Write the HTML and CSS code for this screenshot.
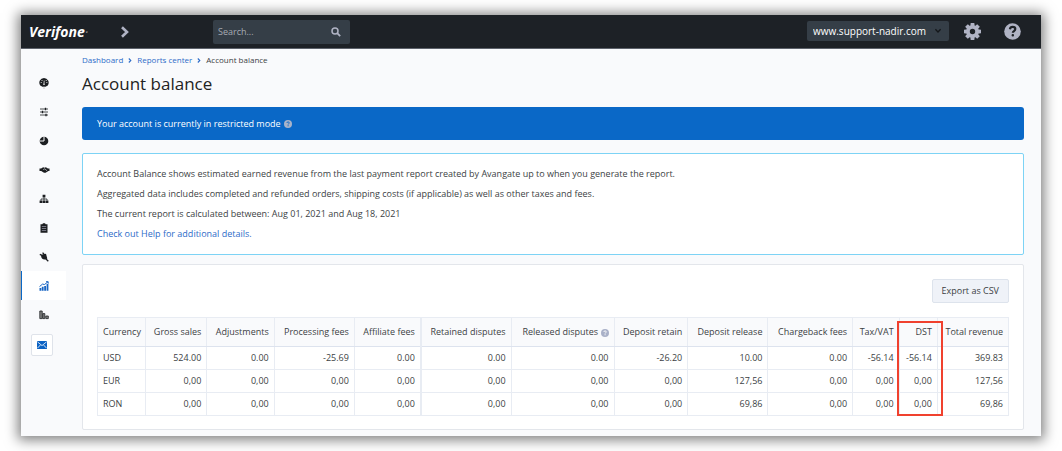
FILE: index.html
```html
<!DOCTYPE html>
<html lang="en">
<head>
<meta charset="utf-8">
<title>Account balance</title>
<link rel="stylesheet" href="styles.css">
</head>
<body>
<div class="frame">
  <header class="topbar">
    <a class="logo" href="#">Verifone<span class="logo-mark">·</span></a>
    <button class="icon-button expand" aria-label="Expand menu">
      <svg width="10" height="12" viewBox="0 0 10 12"><path d="M2 1.2 7 6 2 10.8" fill="none" stroke="currentColor" stroke-width="2.6"/></svg>
    </button>
    <form class="search">
      <input class="search-input" type="text" aria-label="Search" placeholder="Search...">
      <button class="icon-button" type="button" aria-label="Search">
        <svg width="10" height="10" viewBox="0 0 10 10"><circle cx="4" cy="4" r="3" fill="none" stroke="currentColor" stroke-width="1.5"/><path d="m6.2 6.2 3 3" stroke="currentColor" stroke-width="1.8"/></svg>
      </button>
    </form>
    <div class="site">
      <select class="site-select" aria-label="Site"><option>www.support-nadir.com</option></select>
      <svg class="site-arrow" width="8" height="6" viewBox="0 0 8 6"><path d="m1.4 1.2 2.6 2.8 2.6-2.8" fill="none" stroke="currentColor" stroke-width="1.3"/></svg>
    </div>
    <button class="icon-button settings" aria-label="Settings">
      <svg width="17" height="17" viewBox="-12 -12 24 24"><g fill="currentColor"><path d="M-2.600-12h5.200l.6 5h-6.400z"/><path d="M-2.600-12h5.200l.6 5h-6.400z" transform="rotate(45)"/><path d="M-2.600-12h5.200l.6 5h-6.400z" transform="rotate(90)"/><path d="M-2.600-12h5.200l.6 5h-6.400z" transform="rotate(135)"/><path d="M-2.600-12h5.200l.6 5h-6.400z" transform="rotate(180)"/><path d="M-2.600-12h5.200l.6 5h-6.400z" transform="rotate(225)"/><path d="M-2.600-12h5.200l.6 5h-6.400z" transform="rotate(270)"/><path d="M-2.600-12h5.200l.6 5h-6.400z" transform="rotate(315)"/></g><circle r="6.300" fill="none" stroke="currentColor" stroke-width="5"/></svg>
    </button>
    <button class="icon-button help" aria-label="Help">
      <svg width="17" height="17" viewBox="0 0 17 17"><circle cx="8.500" cy="8.500" r="8.300" fill="currentColor"/><path d="M5.900 6.300c.3-1.700 1.300-2.400 2.700-2.400 1.600 0 2.700.9 2.700 2.200 0 2-2.500 1.900-2.500 3.700" fill="none" stroke="#1d2126" stroke-width="2.200"/><rect x="7.600" y="11" width="2.400" height="2.400" rx="1" fill="#1d2126"/></svg>
    </button>
  </header>
  <div class="body">
    <nav class="sidebar" aria-label="Main">
      <a class="nav-item" href="#" aria-label="Dashboard"><svg width="10" height="12" viewBox="0 0 10 12"><path fill="currentColor" d="M5 1a4.700 4.700 0 0 1 3.800 7.400L6.500 9.800h-3L1.200 8.400A4.700 4.700 0 0 1 5 1z"/><path d="m5.200 3.600-.2 3.200" stroke="#fff" stroke-width=".7"/><path d="M5 9.500V12" stroke="#aaa" stroke-width=".6"/><g fill="#fff"><circle cx="5" cy="7.200" r=".8"/><circle cx="2.200" cy="5.600" r=".5"/><circle cx="3" cy="3.500" r=".5"/><circle cx="7.200" cy="3.500" r=".5"/><circle cx="7.900" cy="5.600" r=".5"/></g></svg></a>
      <a class="nav-item" href="#" aria-label="Setup"><svg width="10" height="10" viewBox="0 0 10 10"><path d="M1 2h8M1 5h8M1 8h8" stroke="currentColor" stroke-width=".8"/><path d="M6.500.8v2.400M3.500 3.800v2.400M7 6.800v2.400" stroke="currentColor" stroke-width="1.300"/></svg></a>
      <a class="nav-item" href="#" aria-label="Analytics"><svg width="10" height="10" viewBox="0 0 10 10"><circle cx="5" cy="5" r="4.300" fill="currentColor"/><path d="M5 .5V5H1" fill="none" stroke="#f9fafc" stroke-width="1"/></svg></a>
      <a class="nav-item" href="#" aria-label="Partners"><svg width="11" height="8" viewBox="0 0 11 8"><path fill="currentColor" d="M.5 2.500h1.600l2-1.200 1.400.5 1.400-.5 2 1.200h1.600v2.500H9.400L6.600 6.800H5L2.200 5H.5z"/><path d="m4.200 3.600 1.600-.8L8 4.800" fill="none" stroke="#f9fafc" stroke-width=".6"/></svg></a>
      <a class="nav-item" href="#" aria-label="Affiliates"><svg width="10" height="10" viewBox="0 0 10 10"><path fill="currentColor" d="M3.600.8h2.800v2.800H3.600zM.6 6.400h2.700v2.700H.6zM3.700 6.400h2.600v2.700H3.700zM6.700 6.400h2.700v2.700H6.700z"/><path d="M2 6.400V5h6v1.400M5 3.500v3" fill="none" stroke="currentColor" stroke-width=".8"/></svg></a>
      <a class="nav-item" href="#" aria-label="Orders"><svg width="8" height="10" viewBox="0 0 8 10"><path fill="currentColor" d="M.5 1.200h1.800L3 .3h2l.7.9h1.800v8.500h-7z"/><path d="M1.800 3.500h4.400M1.800 5.500h4.400M1.800 7.500h4.400" stroke="#99a" stroke-width=".7"/></svg></a>
      <a class="nav-item" href="#" aria-label="Integrations"><svg width="10" height="10" viewBox="0 0 10 10"><path fill="currentColor" d="M2.500 2.800 7 1.800 8.300 6.500C6.500 8 4.200 7.800 3 6.400 1.900 5.200 2 3.800 2.500 2.800z"/><path d="M6.500 6.500 9.300 9.300M3.400 3.600.8 2.400M5.600 3 3.600.6" stroke="currentColor" stroke-width="1.300"/></svg></a>
      <a class="nav-item nav-active" href="#" aria-label="Reports center" aria-current="page"><svg width="10" height="10" viewBox="0 0 10 10"><path fill="currentColor" d="M.5 7h1.800v2.700H.5zM2.800 5.700h1.800v4H2.800zM5.200 5h1.800v4.700H5.200zM7.600 3h1.800v6.700H7.600z"/><path d="m.5 5.600 3-2.500 2 .4L9 .8M7 .7h2.200v2" fill="none" stroke="currentColor" stroke-width="1"/></svg></a>
      <a class="nav-item" href="#" aria-label="Finances"><svg width="10" height="10" viewBox="0 0 10 10"><g fill="#888" stroke="currentColor" stroke-width=".8"><path d="M.8 1h2.400v7.600H.8zM3.800 3.600h2v5h-2zM6.800 6h2.500v2.600H6.800z"/></g></svg></a>
      <button class="mail" aria-label="Messages"><svg width="10" height="8" viewBox="0 0 10 8"><path fill="currentColor" d="M0 0h10v8H0z"/><path d="m.4.8 4.600 3.800L9.600.8M.4 7.200 3.400 4M9.600 7.200 6.600 4" fill="none" stroke="#fff" stroke-width=".8"/></svg></button>
    </nav>
    <main class="content">
      <nav class="crumbs" aria-label="Breadcrumb">
        <a href="#">Dashboard</a>
        <svg width="4" height="6" viewBox="0 0 4 6"><path d="m.8 1.500 2 2-2 2" fill="none" stroke="#2d6cc8" stroke-width="1.100"/></svg>
        <a href="#">Reports center</a>
        <svg width="4" height="6" viewBox="0 0 4 6"><path d="m.8 1.500 2 2-2 2" fill="none" stroke="#2d6cc8" stroke-width="1.100"/></svg>
        <span>Account balance</span>
      </nav>
      <h1 class="title">Account balance</h1>
      <div class="banner">
        <span>Your account is currently in restricted mode</span>
        <svg width="8" height="8" viewBox="0 0 8 8"><circle cx="4" cy="4" r="4" fill="#a9b3c9"/><path d="M2.800 3c.1-.8.6-1.100 1.300-1.100.7 0 1.200.4 1.200 1 0 .9-1.200.9-1.200 1.700" fill="none" stroke="#0a68c7" stroke-width=".9"/><path d="M3.600 5.200h1v1h-1z" fill="#0a68c7"/></svg>
      </div>
      <section class="info">
        <p>Account Balance shows estimated earned revenue from the last payment report created by Avangate up to when you generate the report.</p>
        <p>Aggregated data includes completed and refunded orders, shipping costs (if applicable) as well as other taxes and fees.</p>
        <p>The current report is calculated between: Aug 01, 2021 and Aug 18, 2021</p>
        <p><a href="#">Check out Help for additional details.</a></p>
      </section>
      <section class="panel">
        <button class="export">Export as CSV</button>
        <div class="table-wrap">
          <table class="balance">
            <colgroup>
              <col class="c-currency"><col class="c-gross"><col class="c-adjust"><col class="c-processing"><col class="c-affiliate"><col class="c-retained"><col class="c-released"><col class="c-deposit"><col class="c-release"><col class="c-chargeback"><col class="c-tax"><col class="c-dst"><col class="c-total">
            </colgroup>
            <thead>
              <tr><th>Currency</th><th>Gross sales</th><th>Adjustments</th><th>Processing fees</th><th>Affiliate fees</th><th class="group">Retained disputes</th><th>Released disputes <svg width="8" height="8" viewBox="0 0 8 8"><circle cx="4" cy="4" r="4" fill="#a9b1c8"/><path d="M2.800 3c.1-.8.6-1.100 1.300-1.100.7 0 1.200.4 1.200 1 0 .9-1.200.9-1.200 1.700" fill="none" stroke="#fff" stroke-width=".9"/><path d="M3.600 5.200h1v1h-1z" fill="#fff"/></svg></th><th>Deposit retain</th><th>Deposit release</th><th>Chargeback fees</th><th>Tax/VAT</th><th>DST</th><th>Total revenue</th></tr>
            </thead>
            <tbody>
              <tr><td>USD</td><td>524.00</td><td>0.00</td><td>-25.69</td><td>0.00</td><td class="group">0.00</td><td>0.00</td><td>-26.20</td><td>10.00</td><td>0.00</td><td>-56.14</td><td>-56.14</td><td>369.83</td></tr>
              <tr><td>EUR</td><td>0,00</td><td>0,00</td><td>0,00</td><td>0,00</td><td class="group">0,00</td><td>0,00</td><td>0,00</td><td>127,56</td><td>0,00</td><td>0,00</td><td>0,00</td><td>127,56</td></tr>
              <tr><td>RON</td><td>0,00</td><td>0,00</td><td>0,00</td><td>0,00</td><td class="group">0,00</td><td>0,00</td><td>0,00</td><td>69,86</td><td>0,00</td><td>0,00</td><td>0,00</td><td>69,86</td></tr>
            </tbody>
          </table>
          <div class="highlight"></div>
        </div>
      </section>
    </main>
  </div>
</div>
</body>
</html>
```
FILE: styles.css
```css
* { box-sizing: border-box; }
body {
  margin: 0;
  padding: 15px 21px;
  background: #fff;
  color: #3c3f44;
  font: 9px/14px "Open Sans", sans-serif;
}
a { color: #2d6cc8; text-decoration: none; }
button, input, select { font: inherit; color: inherit; }
svg { display: block; flex: none; }
.frame {
  background: #f9fafc;
  box-shadow: 0 1px 12px 3px rgba(0, 0, 0, 0.5);
}
.topbar {
  display: flex;
  align-items: center;
  height: 34px;
  padding: 0 20px 0 8px;
  background: #1d2126;
  border-bottom: 1px solid #5d626b;
  color: #b0b3c4;
}
.logo {
  width: 91px;
  color: #fff;
  font: italic 700 14px/18px "Open Sans", sans-serif;
}
.logo-mark { font-weight: 400; color: #888; }
.icon-button {
  padding: 0;
  border: 0;
  background: none;
}
.expand { width: 93px; }
.search {
  display: flex;
  align-items: center;
  width: 137px;
  height: 24px;
  padding: 0 9px 0 5px;
  border-radius: 2px;
  background: #353e47;
}
.search-input {
  flex: 1;
  min-width: 0;
  padding: 0;
  border: 0;
  outline: 0;
  background: none;
}
.search-input::placeholder { color: #a6abb3; opacity: 1; }
.site {
  position: relative;
  width: 142px;
  margin: 0 0 2px auto;
}
.site-select {
  display: block;
  width: 100%;
  height: 20px;
  padding: 0 6px;
  border: 0;
  border-radius: 2px;
  background: #353e47;
  color: #fff;
  font-size: 10px;
  appearance: none;
}
.site-arrow {
  position: absolute;
  right: 7px;
  top: 7px;
  color: #14171a;
}
.settings { margin-left: 15px; }
.help { margin-left: 23px; }
.body { display: flex; }
.sidebar {
  display: flex;
  flex-direction: column;
  width: 45px;
  padding-top: 19px;
}
.nav-item {
  display: flex;
  align-items: center;
  justify-content: center;
  height: 29px;
  border-left: 1px solid transparent;
  color: #1c1e21;
}
.nav-active {
  background: #fff;
  border-color: #0a68c7;
  color: #1a66c4;
}
.mail {
  display: grid;
  place-items: center;
  width: 22px;
  height: 22px;
  margin: 5px 0 0 10px;
  padding: 0;
  border: 1px solid #dfe3ea;
  border-radius: 2px;
  background: #fff;
  color: #0a62c4;
}
.content {
  flex: 1;
  min-width: 0;
  padding: 4px 17px 6px 16px;
}
.crumbs {
  display: flex;
  align-items: center;
  gap: 5px;
  font-size: 8px;
}
.title {
  margin: 5px 0 11px;
  color: #222;
  font-size: 17px;
  font-weight: 400;
  line-height: 24px;
}
.banner {
  display: flex;
  align-items: center;
  gap: 3px;
  height: 33px;
  padding: 0 15px;
  border-radius: 3px;
  background: #0a68c7;
  color: #fff;
}
.info {
  margin: 13px 0 9px;
  padding: 10px 14px;
  border: 1px solid #7dd3f5;
  border-radius: 2px;
  background: #fff;
}
.info p {
  margin: 0;
  line-height: 20px;
}
.panel {
  padding: 14px 14px 13px;
  border: 1px solid #e3e6eb;
  border-radius: 2px;
  background: #fff;
}
.export {
  display: block;
  height: 24px;
  margin: 0 0 14px auto;
  padding: 0 9px;
  border: 1px solid #dde3ec;
  border-radius: 2px;
  background: #eff2f8;
}
.table-wrap { position: relative; }
.balance {
  width: 100%;
  border-collapse: collapse;
  table-layout: fixed;
}
.balance th, .balance td {
  height: 23px;
  padding: 0 5px 0 0;
  border: 1px solid #e8ecf3;
  text-align: right;
  white-space: nowrap;
  font-weight: 400;
}
.balance th {
  height: 29px;
  background: #f9fafc;
  border-bottom-color: #dde3ee;
}
.balance th:first-child, .balance td:first-child {
  padding: 0 0 0 5px;
  text-align: left;
}
.balance .group { border-left: 2px solid #e8ecf3; }
.balance svg {
  display: inline-block;
  vertical-align: middle;
}
.c-currency { width: 5.3%; }
.c-gross { width: 6.7%; }
.c-adjust { width: 7.4%; }
.c-processing { width: 8.8%; }
.c-affiliate { width: 7.3%; }
.c-retained { width: 9.9%; }
.c-released { width: 11.3%; }
.c-deposit { width: 8.1%; }
.c-release { width: 8.8%; }
.c-chargeback { width: 9.3%; }
.c-tax { width: 5.1%; }
.c-dst { width: 4.2%; }
.c-total { width: 7.8%; }
.highlight {
  position: absolute;
  top: 4px;
  right: 66px;
  bottom: 0;
  width: 46px;
  border: 2px solid #f0412e;
}
```
